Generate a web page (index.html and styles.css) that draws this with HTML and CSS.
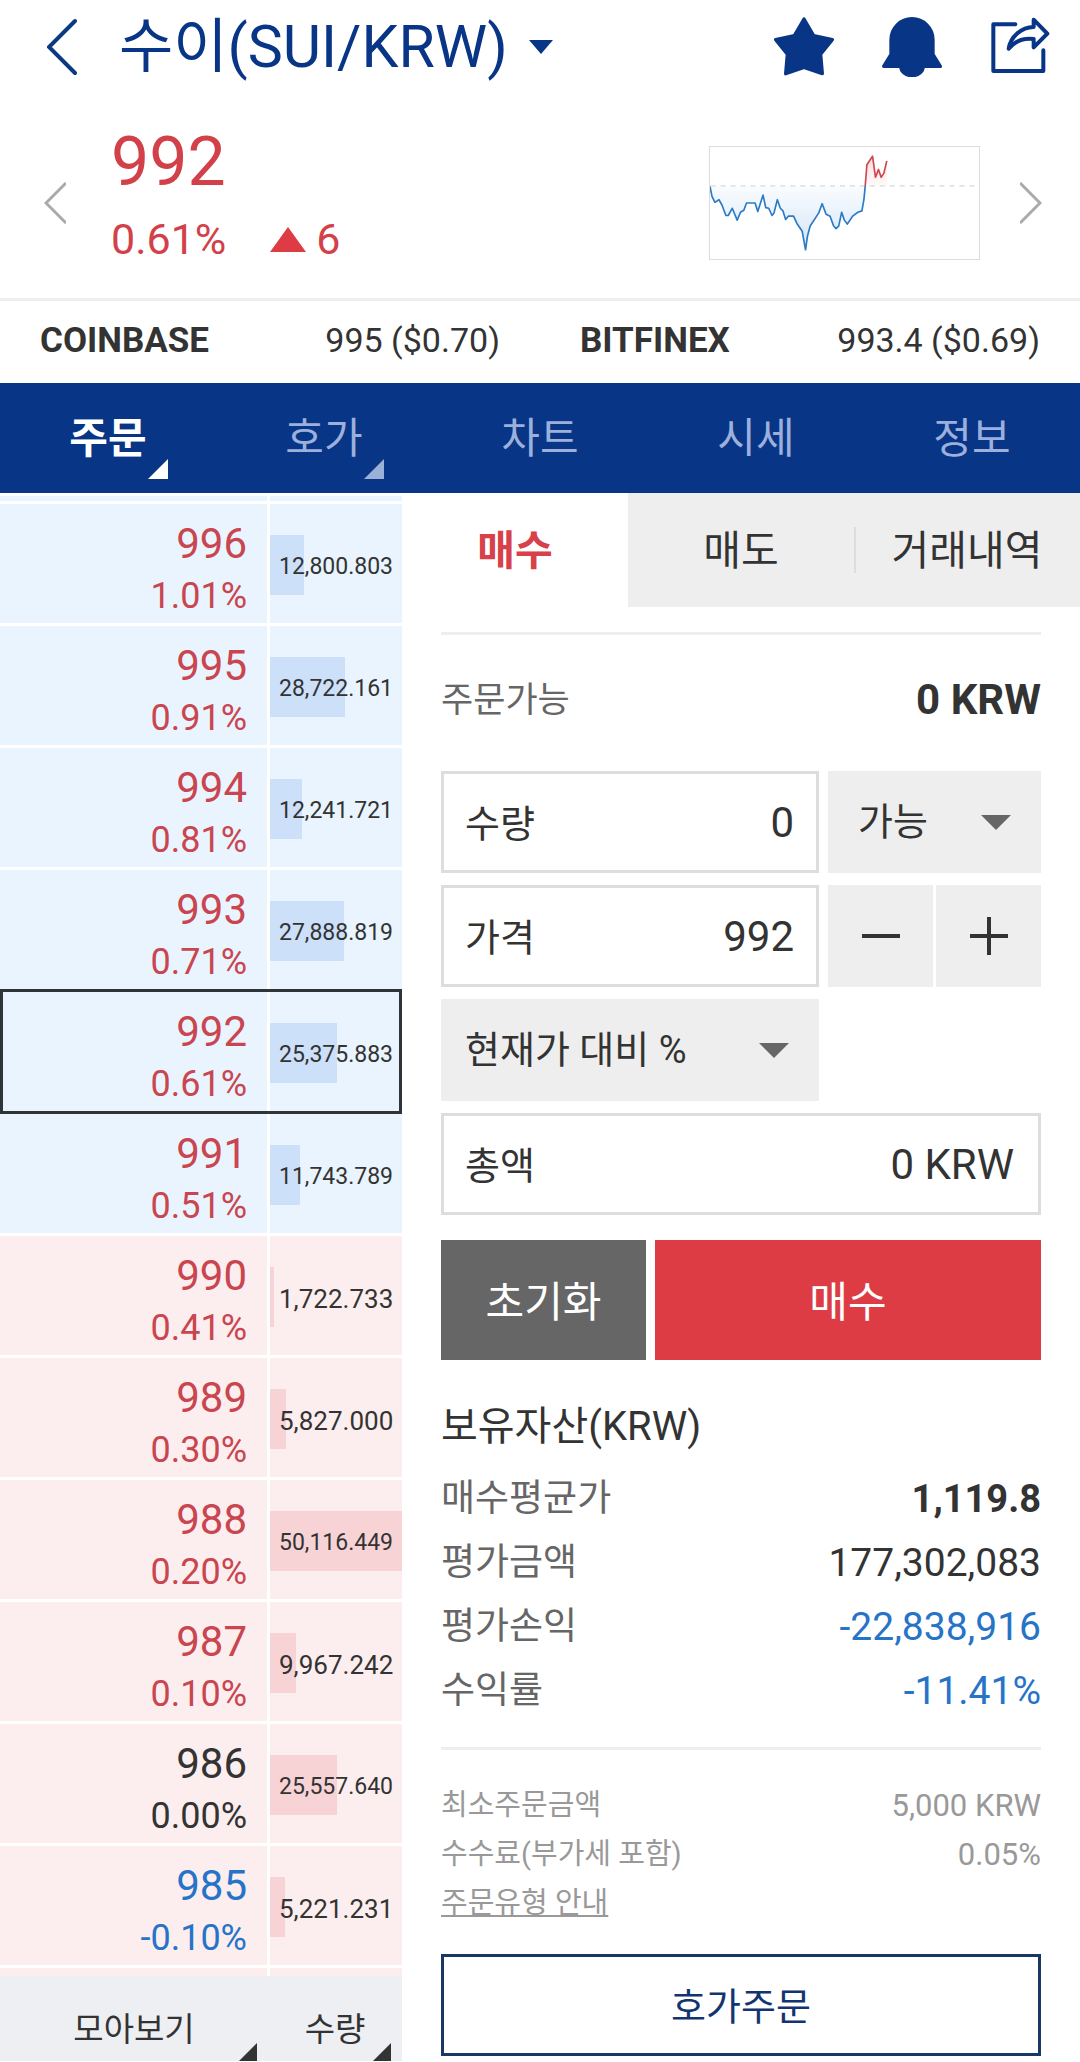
FILE: index.html
```
<!DOCTYPE html>
<html lang="ko">

<head>
    <meta charset="UTF-8">
    <meta name="viewport" content="width=device-width, initial-scale=1.0">
    <link rel="stylesheet" href="styles.css">
    <title>수이(SUI/KRW)</title>
</head>

<body>

    <div class="wrapper">
        <header class="header">
            <button class="icon_btn" aria-label="뒤로">
                <svg class="back" width="30" height="58" viewBox="0 0 30 58"><path d="M28 3 2 29l26 26"/></svg>
            </button>
            <button class="pair">
                <span>수이(SUI/KRW)</span>
                <svg width="26" height="14" viewBox="0 0 26 14"><path d="M1 0h24L13 14z"/></svg>
            </button>
            <div class="header_icons">
                <button class="icon_btn" aria-label="관심">
                    <svg class="solid" width="60" height="60" viewBox="0 0 180 180"><path d="M90 6l29 50 56 12-35 44 5 58-55-19-55 19 5-58L5 68l56-12z"/></svg>
                </button>
                <button class="icon_btn" aria-label="알림">
                    <svg class="solid" width="60" height="60" viewBox="0 0 180 180"><path d="M27 68a63 63 0 0 1 126 0v44l22 36h-51a34 28 0 0 1-68 0H5l22-36z"/></svg>
                </button>
                <button class="icon_btn" aria-label="공유">
                    <svg class="line" width="60" height="60" viewBox="0 0 180 180"><path d="M76 22H10v140h150v-62"/><path d="M131 8l41 42-41 41V66c-32-4-56 6-75 29 5-36 38-64 75-65z"/></svg>
                </button>
            </div>
        </header>

        <section class="quote">
            <button class="icon_btn" aria-label="이전">
                <svg class="arrow" width="22" height="42" viewBox="0 0 22 42"><path d="M22 1 2 21l20 20"/></svg>
            </button>
            <div class="quote_info">
                <strong class="quote_price">992</strong>
                <div class="quote_change">
                    <span>0.61%</span>
                    <span class="diff"><i class="up"></i>6</span>
                </div>
            </div>
            <svg class="spark" viewBox="0 0 811 340" preserveAspectRatio="none">
                <defs>
                    <linearGradient id="down" x1="0" y1="0" x2="0" y2="1">
                        <stop offset="0" stop-color="#fafcff"/>
                        <stop offset="1" stop-color="#d3e5f6"/>
                    </linearGradient>
                    <linearGradient id="rise" x1="0" y1="0" x2="0" y2="1">
                        <stop offset="0" stop-color="#f9dcde"/>
                        <stop offset="1" stop-color="#fffafa"/>
                    </linearGradient>
                </defs>
                <path fill="url(#down)" d="M0 120 6 150 15 168 27 160 36 176 48 208 55 208 67 186 82 222 92 198 102 192 110 170 136 170 144 196 160 146 168 184 177 186 187 208 193 200 203 160 212 186 220 194 228 220 236 210 252 210 262 232 278 256 288 312 294 270 302 240 328 200 338 172 350 204 362 210 372 238 380 248 388 240 397 198 405 222 414 234 430 210 446 198 458 194 464 160 468 118z"/>
                <path fill="url(#rise)" d="M468 118 473 54 490 28 499 92 508 68 516 92 524 80 533 42V118z"/>
                <path class="spark_base" d="M2 118H800"/>
                <path class="spark_down" d="M0 120 6 150 15 168 27 160 36 176 48 208 55 208 67 186 82 222 92 198 102 192 110 170 136 170 144 196 160 146 168 184 177 186 187 208 193 200 203 160 212 186 220 194 228 220 236 210 252 210 262 232 278 256 288 312 294 270 302 240 328 200 338 172 350 204 362 210 372 238 380 248 388 240 397 198 405 222 414 234 430 210 446 198 458 194 464 160 468 118"/>
                <path class="spark_up" d="M468 118 473 54 490 28 499 92 508 68 516 92 524 80 533 42"/>
            </svg>
            <button class="icon_btn" aria-label="다음">
                <svg class="arrow" width="22" height="42" viewBox="0 0 22 42"><path d="M0 1l20 20L0 41"/></svg>
            </button>
        </section>

        <section class="markets">
            <div class="market"><b>COINBASE</b><span>995 ($0.70)</span></div>
            <div class="market"><b>BITFINEX</b><span>993.4 ($0.69)</span></div>
        </section>

        <nav class="nav">
            <a href="#order" class="nav_item active more">주문</a>
            <a href="#book" class="nav_item more">호가</a>
            <a href="#chart" class="nav_item">차트</a>
            <a href="#trades" class="nav_item">시세</a>
            <a href="#info" class="nav_item">정보</a>
        </nav>

        <main class="main">
            <div class="book" id="book">
                <table class="book_table">
                    <tbody class="ask">
                        <tr class="cut"><td class="price"></td><td class="amount"></td></tr>
                        <tr><td class="price"><b>996</b><span>1.01%</span></td><td class="amount"><div class="qty"><i class="bar" style="width: 26%"></i><span>12,800.803</span></div></td></tr>
                        <tr><td class="price"><b>995</b><span>0.91%</span></td><td class="amount"><div class="qty"><i class="bar" style="width: 57%"></i><span>28,722.161</span></div></td></tr>
                        <tr><td class="price"><b>994</b><span>0.81%</span></td><td class="amount"><div class="qty"><i class="bar" style="width: 24%"></i><span>12,241.721</span></div></td></tr>
                        <tr><td class="price"><b>993</b><span>0.71%</span></td><td class="amount"><div class="qty"><i class="bar" style="width: 56%"></i><span>27,888.819</span></div></td></tr>
                        <tr class="current"><td class="price"><b>992</b><span>0.61%</span></td><td class="amount"><div class="qty"><i class="bar" style="width: 51%"></i><span>25,375.883</span></div></td></tr>
                        <tr><td class="price"><b>991</b><span>0.51%</span></td><td class="amount"><div class="qty"><i class="bar" style="width: 23%"></i><span>11,743.789</span></div></td></tr>
                    </tbody>
                    <tbody class="bid">
                        <tr><td class="price"><b>990</b><span>0.41%</span></td><td class="amount"><div class="qty big"><i class="bar" style="width: 3%"></i><span>1,722.733</span></div></td></tr>
                        <tr><td class="price"><b>989</b><span>0.30%</span></td><td class="amount"><div class="qty big"><i class="bar" style="width: 12%"></i><span>5,827.000</span></div></td></tr>
                        <tr><td class="price"><b>988</b><span>0.20%</span></td><td class="amount"><div class="qty"><i class="bar" style="width: 100%"></i><span>50,116.449</span></div></td></tr>
                        <tr><td class="price"><b>987</b><span>0.10%</span></td><td class="amount"><div class="qty big"><i class="bar" style="width: 20%"></i><span>9,967.242</span></div></td></tr>
                        <tr><td class="price same"><b>986</b><span>0.00%</span></td><td class="amount"><div class="qty"><i class="bar" style="width: 51%"></i><span>25,557.640</span></div></td></tr>
                        <tr><td class="price down"><b>985</b><span>-0.10%</span></td><td class="amount"><div class="qty big"><i class="bar" style="width: 11%"></i><span>5,221.231</span></div></td></tr>
                        <tr class="cut"><td class="price"></td><td class="amount"></td></tr>
                    </tbody>
                </table>
                <div class="book_footer">
                    <button class="book_btn group">모아보기</button>
                    <button class="book_btn unit">수량</button>
                </div>
            </div>

            <div class="order" id="order">
                <div class="tabs">
                    <button class="tab active">매수</button>
                    <button class="tab">매도</button>
                    <button class="tab split">거래내역</button>
                </div>
                <form class="form">
                    <div class="available">
                        <span>주문가능</span>
                        <b>0 KRW</b>
                    </div>
                    <div class="fields">
                        <div class="field">
                            <label for="amount">수량</label>
                            <input id="amount" type="text" value="0">
                        </div>
                        <div class="select short">
                            <select aria-label="가능">
                                <option>가능</option>
                            </select>
                        </div>
                        <div class="field">
                            <label for="price">가격</label>
                            <input id="price" type="text" value="992">
                        </div>
                        <div class="steps">
                            <button type="button" class="step" aria-label="빼기"><svg width="38" height="38" viewBox="0 0 38 38"><path d="M0 19h38"/></svg></button>
                            <button type="button" class="step" aria-label="더하기"><svg width="38" height="38" viewBox="0 0 38 38"><path d="M0 19h38M19 0v38"/></svg></button>
                        </div>
                        <div class="select">
                            <select aria-label="현재가 대비">
                                <option>현재가 대비 %</option>
                            </select>
                        </div>
                        <div class="field wide">
                            <label for="total">총액</label>
                            <input id="total" type="text" value="0 KRW">
                        </div>
                    </div>
                    <div class="actions">
                        <button type="reset" class="reset">초기화</button>
                        <button type="button" class="buy">매수</button>
                    </div>

                    <h2>보유자산(KRW)</h2>
                    <dl class="assets">
                        <div><dt>매수평균가</dt><dd class="strong">1,119.8</dd></div>
                        <div><dt>평가금액</dt><dd>177,302,083</dd></div>
                        <div><dt>평가손익</dt><dd class="down">-22,838,916</dd></div>
                        <div><dt>수익률</dt><dd class="down">-11.41%</dd></div>
                    </dl>
                    <dl class="fees">
                        <div><dt>최소주문금액</dt><dd>5,000 KRW</dd></div>
                        <div><dt>수수료(부가세 포함)</dt><dd>0.05%</dd></div>
                    </dl>
                    <a href="#help" class="help">주문유형 안내</a>
                    <button type="button" class="book_order">호가주문</button>
                </form>
            </div>
        </main>
    </div>

</body>

</html>
```
FILE: styles.css
```
* {
    margin: 0;
    padding: 0;
    box-sizing: border-box;
}

body {
    background: #fff;
    color: #333;
    font-family: Roboto, "Noto Sans CJK KR", sans-serif;
}

button,
input,
select {
    font: inherit;
    color: inherit;
    background: none;
    border: 0;
    border-radius: 0;
}

a {
    color: inherit;
    text-decoration: none;
}

svg {
    display: block;
}

.wrapper {
    width: 100%;
}

/* header */

.header {
    height: 94px;
    padding: 0 30px 0 47px;
    display: flex;
    align-items: center;
    color: #083585;
}

.back {
    fill: none;
    stroke: #0b3a80;
    stroke-width: 4;
    stroke-linecap: round;
}

.pair {
    margin-left: 42px;
    display: flex;
    align-items: center;
    gap: 20px;
    font-size: 59px;
    line-height: 82px;
}

.pair svg {
    fill: #083585;
}

.header_icons {
    margin-left: auto;
    display: flex;
    gap: 48px;
}

.solid {
    fill: #083585;
    stroke: #083585;
    stroke-width: 10;
    stroke-linejoin: round;
}

.line {
    fill: none;
    stroke: #083585;
    stroke-width: 12;
    stroke-linecap: round;
    stroke-linejoin: round;
}

/* quote */

.quote {
    height: 207px;
    padding: 13px 38px 0 44px;
    display: flex;
    align-items: center;
    border-bottom: 3px solid #eee;
}

.arrow {
    fill: none;
    stroke: #aaa;
    stroke-width: 3;
}

.quote_info {
    margin-left: 45px;
    padding-bottom: 4px;
    color: #d2414a;
}

.quote_price {
    display: block;
    font-size: 68px;
    font-weight: 400;
    line-height: 77px;
}

.quote_change {
    display: flex;
    gap: 44px;
    font-size: 43px;
    line-height: 77px;
}

.diff {
    display: flex;
    align-items: center;
    gap: 10px;
}

.up {
    border: solid transparent;
    border-width: 0 18px 25px;
    border-bottom-color: #de3c45;
}

.spark {
    width: 271px;
    height: 114px;
    margin-left: auto;
    margin-right: 40px;
    border: 1px solid #ddd;
}

.spark path {
    stroke-width: 5;
    stroke-linejoin: round;
}

.spark_base {
    stroke: #e2e2e2;
    stroke-dasharray: 15 15;
}

.spark_down {
    fill: none;
    stroke: #2b7ac6;
}

.spark_up {
    fill: none;
    stroke: #cf4650;
}

/* other markets */

.markets {
    height: 82px;
    padding: 0 40px 4px;
    display: grid;
    grid-template-columns: 1fr 1fr;
    gap: 80px;
    align-items: center;
    font-size: 35px;
}

.market {
    display: flex;
    justify-content: space-between;
}

.market span {
    font-size: 34px;
}

/* nav */

.nav {
    height: 110px;
    display: grid;
    grid-template-columns: repeat(5, 1fr);
    background: #083585;
}

.nav_item {
    position: relative;
    color: #9bb0dd;
    font-size: 42px;
    line-height: 112px;
    text-align: center;
}

.nav_item.active {
    color: #fff;
    font-weight: 700;
}

.more::after,
.book_btn::after {
    content: "";
    position: absolute;
    border: solid transparent;
    border-right-color: currentColor;
}

.more::after {
    right: 48px;
    bottom: 16px;
    border-width: 20px 20px 0 0;
}

.nav_item:not(.active)::after {
    border-right-color: #9bb0d6;
}

.main {
    display: grid;
    grid-template-columns: 402px minmax(0, 1fr);
}

/* order book */

.book {
    padding-top: 3px;
    display: flex;
    flex-direction: column;
}

.book_table {
    width: 100%;
    border-spacing: 0;
    table-layout: fixed;
}

.book_table td {
    height: 122px;
    border-bottom: 3px solid #fff;
    vertical-align: top;
}

.book_table .cut td {
    height: 8px;
}

.bid .cut td {
    border-bottom: 0;
}

.ask td {
    background: #e9f4fe;
}

.bid td {
    background: #fceeee;
}

.price {
    padding: 13px 20px 0 0;
    border-right: 3px solid #fff;
    color: #c9454f;
    text-align: right;
}

.price.same {
    color: #333;
}

.price b,
.price span {
    display: block;
    font-weight: 400;
    line-height: 53px;
}

.price b {
    font-size: 42px;
}

.price span {
    font-size: 36px;
}

.down,
.price.down {
    color: #2673c8;
}

.amount {
    width: 132px;
    padding-top: 31px;
}

.cut .price,
.cut .amount {
    padding: 0;
}

.qty {
    position: relative;
    height: 60px;
    padding-left: 9px;
    font-size: 23px;
    line-height: 64px;
}

.qty.big {
    font-size: 26px;
}

.qty span {
    position: relative;
}

.bar {
    position: absolute;
    top: 0;
    left: 0;
    height: 60px;
    background: #cce0fa;
}

.bid .bar {
    background: #f7d3d6;
}

/* frame round the last traded price */
.current td {
    position: relative;
}

.current td::after {
    content: "";
    position: absolute;
    inset: -3px 0;
    border: solid #2e3438;
    border-width: 3px 3px 3px 0;
}

.current .price::after {
    right: -3px;
    border-width: 3px 0 3px 3px;
}

.book_footer {
    flex: 1;
    display: grid;
    grid-template-columns: 1fr 134px;
    background: #edeff3;
}

.book_btn {
    position: relative;
    padding-top: 16px;
    font-size: 33px;
}

.book_btn::after {
    right: 11px;
    bottom: 0;
    border-width: 18px 18px 0 0;
}

/* order form */

.tabs {
    height: 114px;
    display: grid;
    grid-template-columns: repeat(3, 1fr);
    background: #eee;
}

.tab {
    position: relative;
    padding-bottom: 6px;
    font-size: 41px;
}

.tab.active {
    background: #fff;
    color: #d8404a;
    font-weight: 700;
}

.split::before {
    content: "";
    position: absolute;
    left: 0;
    top: 34px;
    bottom: 34px;
    border-left: 2px solid #ddd;
}

.form {
    margin: 25px 39px 5px;
    border-top: 3px solid #eee;
}

.available {
    height: 136px;
    padding-bottom: 8px;
    display: flex;
    justify-content: space-between;
    align-items: center;
    color: #666;
    font-size: 35px;
}

.available span {
    padding-bottom: 6px;
}

.available b {
    color: #333;
    font-size: 42px;
}

.fields {
    display: grid;
    grid-template-columns: minmax(0, 1fr) 213px;
    gap: 12px 9px;
}

.field,
.select {
    height: 102px;
    display: flex;
    align-items: center;
    font-size: 38px;
}

.field {
    padding: 0 22px 0 21px;
    border: 3px solid #ddd;
}

.field.wide {
    grid-column: 1 / -1;
    padding-right: 24px;
}

.field label {
    padding-bottom: 4px;
}

.field input {
    flex: 1;
    min-width: 0;
    font-size: 42px;
    text-align: right;
}

.select {
    position: relative;
    background: #eee;
}

.select select {
    width: 100%;
    height: 100%;
    padding: 0 24px;
    appearance: none;
}

.select.short select {
    padding-left: 30px;
}

.select::after {
    content: "";
    position: absolute;
    right: 30px;
    border: solid transparent;
    border-width: 15px 15px 0;
    border-top-color: #666;
    pointer-events: none;
}

.steps {
    display: grid;
    grid-template-columns: 1fr 1fr;
    gap: 3px;
}

.step {
    display: flex;
    align-items: center;
    justify-content: center;
    background: #eee;
}

.step svg {
    stroke: #333;
    stroke-width: 4;
}

.actions {
    margin-top: 25px;
    height: 120px;
    display: grid;
    grid-template-columns: 205px 1fr;
    gap: 9px;
    color: #fff;
    font-size: 42px;
}

.actions button {
    padding-bottom: 4px;
}

.reset {
    background: #666;
}

.buy {
    background: #de3c44;
}

h2 {
    margin-top: 35px;
    font-size: 40px;
    font-weight: 400;
    line-height: 64px;
}

.assets {
    margin-top: 8px;
    padding-bottom: 24px;
    border-bottom: 3px solid #eee;
    line-height: 64px;
}

.assets div,
.fees div {
    display: flex;
    justify-content: space-between;
}

.assets dt {
    color: #666;
    font-size: 37px;
}

.assets dd {
    font-size: 39px;
}

.assets .strong {
    font-size: 38px;
    font-weight: 700;
}

.fees {
    margin-top: 31px;
}

.fees,
.help {
    color: #999;
    font-size: 29px;
    line-height: 49px;
}

.fees dd {
    font-size: 31px;
}

.help {
    display: block;
    width: fit-content;
    text-decoration: underline;
}

.book_order {
    width: 100%;
    height: 102px;
    margin-top: 26px;
    padding-bottom: 4px;
    border: 3px solid #1a3866;
    color: #12346f;
    font-size: 38px;
}
```
